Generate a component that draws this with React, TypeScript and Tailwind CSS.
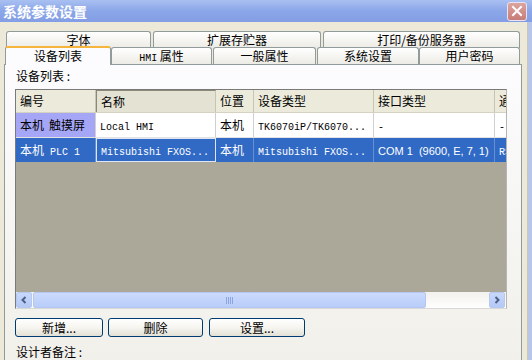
import React from "react";

function M({ children }: { children: React.ReactNode }) {
  return <span className="font-['Liberation_Mono',monospace] text-[10px]">{children}</span>;
}

function Tab({ label, w, active = false }: { label: React.ReactNode; w: number; active?: boolean }) {
  if (active) {
    return (
      <div
        style={{ width: w }}
        className="relative z-10 h-[19px] -mb-px shrink-0 rounded-t-[3px] border border-b-0 border-[#919b9c] border-t-2 border-t-[#f5b43c] bg-[#fcfcfe] text-center text-[12px] leading-[15px] text-black"
      >
        {label}
      </div>
    );
  }
  return (
    <div
      style={{ width: w }}
      className="h-[17px] shrink-0 rounded-t-[3px] border border-b-0 border-[#919b9c] bg-gradient-to-b from-white to-[#ecebe5] text-center text-[12px] leading-[16px] text-black"
    >
      {label}
    </div>
  );
}

function Btn({ label, w }: { label: React.ReactNode; w: number }) {
  return (
    <div
      style={{ width: w }}
      className="flex h-[19px] items-center justify-center rounded-[3px] border border-[#003c74] bg-gradient-to-b from-white via-[#f6f5f0] to-[#e3e1d6] text-[12px] text-black"
    >
      {label}
    </div>
  );
}

const cols = [80, 120, 38, 120, 121, 60];

function HeadCell({ w, children, pressed = false }: { w: number; children: React.ReactNode; pressed?: boolean }) {
  return (
    <div
      style={{ width: w }}
      className={
        "flex h-full shrink-0 items-center pl-[4px] text-[12px] text-black border-r border-r-[#c7c5b2] " +
        (pressed ? "border-l border-l-[#8a8877] border-t border-t-[#8a8877] bg-[#e4e2d3]" : "")
      }
    >
      <span>{children}</span>
    </div>
  );
}

function Cell({ w, children, cls = "" }: { w: number; children: React.ReactNode; cls?: string }) {
  return (
    <div style={{ width: w }} className={"flex h-full shrink-0 items-center overflow-hidden whitespace-pre pl-[4px] text-[12px] border-r " + cls}>
      <span>{children}</span>
    </div>
  );
}

export default function App() {
  return (
    <div className="flex h-[360px] w-[532px] flex-col overflow-hidden bg-[#ece9d8] font-['Noto_Sans_CJK_SC','Liberation_Sans',sans-serif]">
      {/* title bar */}
      <div className="flex h-[22px] shrink-0 items-center justify-between bg-gradient-to-b from-[#a9c0f1] via-[#8ba6e8] to-[#839ee4] pl-[3px] pr-[5px]">
        <span className="text-[14px] font-bold leading-none text-white">系统参数设置</span>
        <div className="flex h-[19px] w-[20px] items-center justify-center rounded-[3px] border border-[#e8e4ef] bg-gradient-to-b from-[#dca49e] to-[#c87c78]">
          <svg width="12" height="12" viewBox="0 0 12 12">
            <path d="M2 2 L10 10 M10 2 L2 10" stroke="white" strokeWidth="2" strokeLinecap="square" />
          </svg>
        </div>
      </div>

      <div className="flex flex-1">
        <div className="flex flex-1 flex-col pl-[4px] pt-[9px]">
          {/* tabs */}
          <div className="flex h-[17px] gap-[2px] pl-[2px]">
            <Tab label="字体" w={145} />
            <Tab label="扩展存贮器" w={168} />
            <Tab label="打印/备份服务器" w={197} />
          </div>
          <div className="-mt-[2px] flex h-[18px] items-end pl-[1px]">
            <Tab label="设备列表" w={106} active />
            <Tab label={<><M>HMI</M> 属性</>} w={101} />
            <div className="w-[1px]" />
            <Tab label="一般属性" w={103} />
            <div className="w-[1px]" />
            <Tab label="系统设置" w={102} />
            <Tab label="用户密码" w={101} />
          </div>
          {/* panel */}
          <div className="flex w-[518px] flex-1 flex-col border border-[#919b9c] bg-gradient-to-b from-[#fcfcfe] to-[#f1f0ea] px-[10px] pt-[3px]">
            <div className="h-[16px] whitespace-pre pl-[1px] text-[12px] leading-[16px] text-black">设备列表 :</div>
            {/* table */}
            <div className="mt-[5px] flex h-[220px] w-[492px] flex-col overflow-hidden border border-[#7a7a7a] border-r-[#b5b5b5] border-b-[#d8d8d8]">
              <div className="flex h-[23px] shrink-0 bg-[#ebeadb] border-b border-b-[#d6d2c2]">
                <HeadCell w={cols[0]}>编号</HeadCell>
                <HeadCell w={cols[1]} pressed>名称</HeadCell>
                <HeadCell w={cols[2]}>位置</HeadCell>
                <HeadCell w={cols[3]}>设备类型</HeadCell>
                <HeadCell w={cols[4]}>接口类型</HeadCell>
                <HeadCell w={cols[5]}>通</HeadCell>
              </div>
              <div className="flex h-[25px] shrink-0 bg-white text-black border-b border-b-[#e2e2e2]">
                <Cell w={cols[0]} cls="bg-[#a6a6f6] border-r-[#d0d0d0]"><span className="mr-[5px]">本机</span>触摸屏</Cell>
                <Cell w={cols[1]} cls="border-r-[#d0d0d0]"><M>Local HMI</M></Cell>
                <Cell w={cols[2]} cls="border-r-[#d0d0d0]">本机</Cell>
                <Cell w={cols[3]} cls="border-r-[#d0d0d0]"><M>TK6070iP/TK6070...</M></Cell>
                <Cell w={cols[4]} cls="border-r-[#d0d0d0]"><M>-</M></Cell>
                <Cell w={cols[5]} cls="border-r-[#d0d0d0]"><M>-</M></Cell>
              </div>
              <div className="flex h-[24px] shrink-0 bg-[#316ac5] text-white">
                <Cell w={cols[0]} cls="border-r-[#6a8fd0]"><span className="mr-[6px]">本机</span><M>PLC 1</M></Cell>
                <Cell w={cols[1]} cls="border border-[#dfe6f3]"><M>Mitsubishi FXOS...</M></Cell>
                <Cell w={cols[2]} cls="border-r-[#6a8fd0]">本机</Cell>
                <Cell w={cols[3]} cls="border-r-[#6a8fd0]"><M>Mitsubishi FXOS...</M></Cell>
                <Cell w={cols[4]} cls="border-r-[#6a8fd0]"><span className="text-[11px] font-['Liberation_Sans',sans-serif]">COM 1  (9600, E, 7, 1)</span></Cell>
                <Cell w={cols[5]} cls="border-r-[#6a8fd0]"><M>RS</M></Cell>
              </div>
              <div className="flex-1 bg-[#aca899]" />
              {/* scrollbar */}
              <div className="flex h-[16px] shrink-0 items-stretch bg-gradient-to-b from-[#f3f1ec] to-[#fefefe]">
                <div className="flex w-[16px] items-center justify-center rounded-[2px] border border-[#b7c8f1] bg-gradient-to-b from-[#c8d8fc] to-[#b5c9f6]">
                  <svg width="8" height="8" viewBox="0 0 8 8">
                    <path d="M5.5 1 L2.5 4 L5.5 7" stroke="#4d6185" strokeWidth="2" fill="none" />
                  </svg>
                </div>
                <div className="ml-[1px] flex w-[393px] items-center justify-center rounded-[2px] border border-[#b4c7f2] bg-gradient-to-b from-[#cbdafd] to-[#b9cdf9]">
                  <div className="flex gap-[1px]">
                    <div className="h-[7px] w-[1px] bg-[#8ea6e0]" />
                    <div className="h-[7px] w-[1px] bg-[#8ea6e0]" />
                    <div className="h-[7px] w-[1px] bg-[#8ea6e0]" />
                    <div className="h-[7px] w-[1px] bg-[#8ea6e0]" />
                  </div>
                </div>
                <div className="flex-1" />
                <div className="mr-[1px] flex w-[16px] items-center justify-center rounded-[2px] border border-[#b7c8f1] bg-gradient-to-b from-[#c8d8fc] to-[#b5c9f6]">
                  <svg width="8" height="8" viewBox="0 0 8 8">
                    <path d="M2.5 1 L5.5 4 L2.5 7" stroke="#4d6185" strokeWidth="2" fill="none" />
                  </svg>
                </div>
              </div>
            </div>
            {/* buttons */}
            <div className="mt-[9px] flex">
              <Btn label="新增..." w={88} />
              <div className="w-[5px]" />
              <Btn label="删除" w={95} />
              <div className="w-[6px]" />
              <Btn label="设置..." w={96} />
            </div>
            <div className="mt-[7px] h-[16px] whitespace-pre pl-[1px] text-[12px] leading-[16px] text-black">设计者备注 :</div>
          </div>
        </div>
        <div className="w-[5px] shrink-0 border-l border-[#c9c7ba] bg-[#b8c6ea]" />
      </div>
    </div>
  );
}
